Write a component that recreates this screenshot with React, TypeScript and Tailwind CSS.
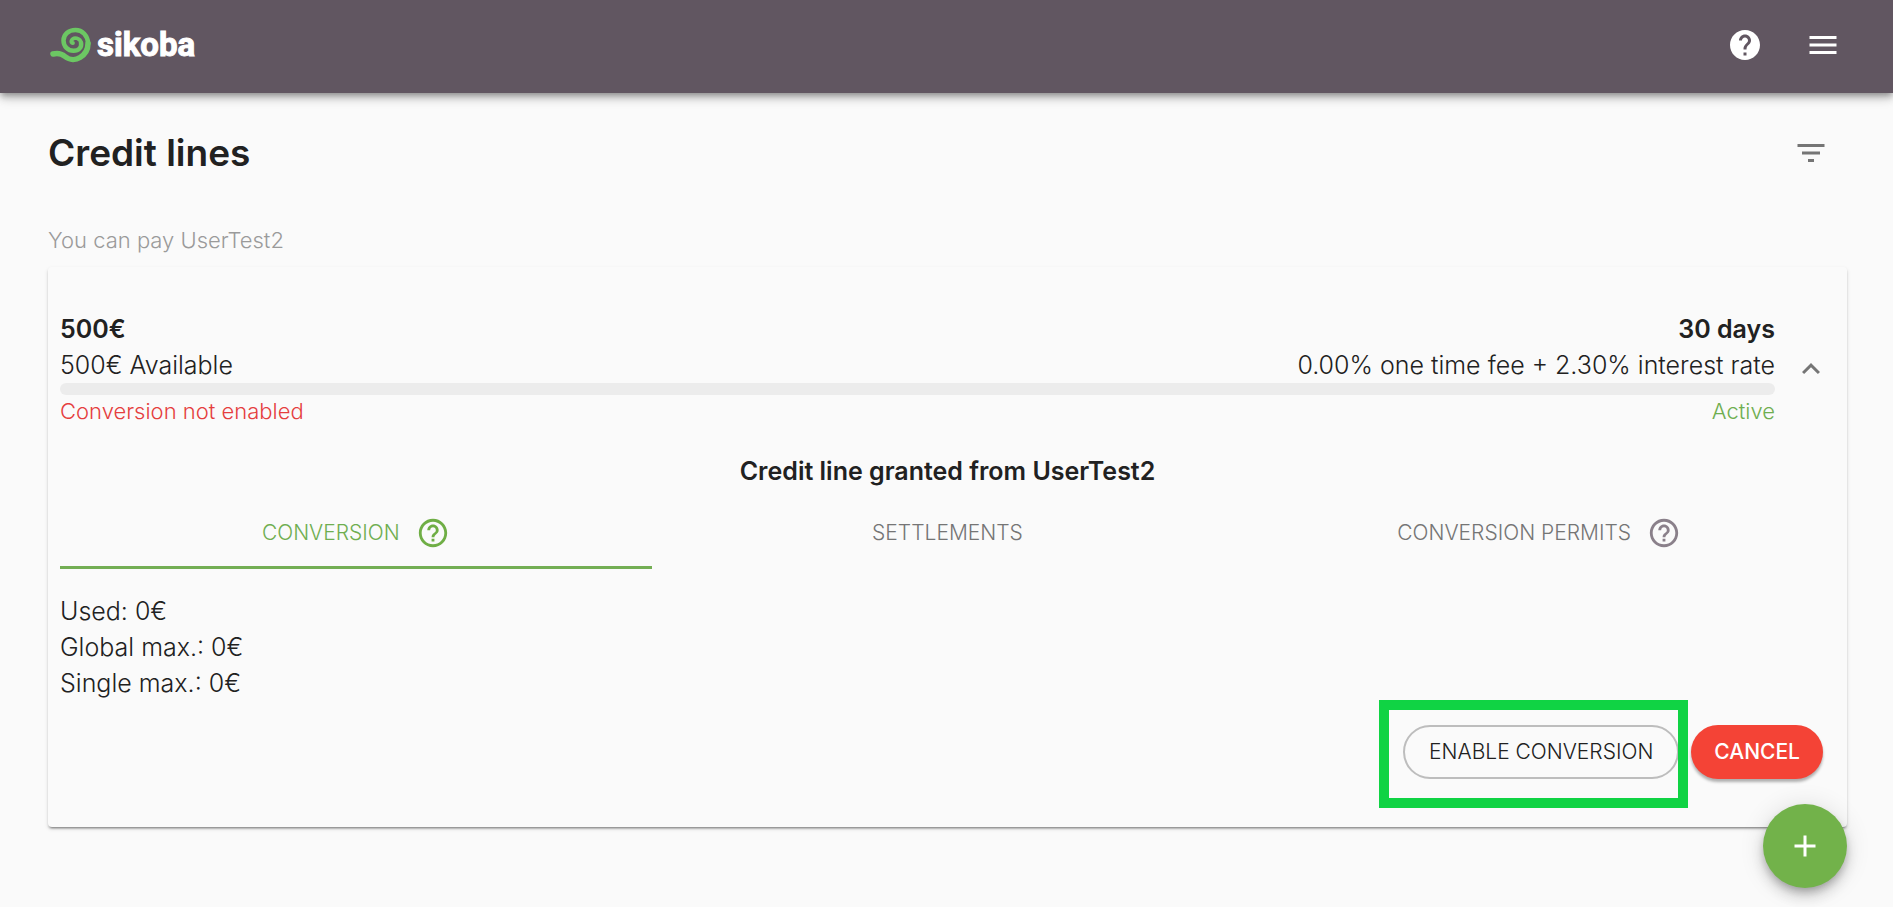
import React from "react";
import { MdHelp, MdHelpOutline, MdMenu, MdFilterList, MdExpandLess, MdAdd } from "react-icons/md";

function Logo() {
  return (
    <a href="#" aria-label="sikoba" className="flex items-center gap-[5px]">
      <svg viewBox="0 0 43 37" className="h-[37px] w-[43px]" fill="none" stroke="#6cc763" strokeLinecap="round" strokeLinejoin="round" aria-hidden="true">
        <path strokeWidth="5.5" d="M4 28 C9 26.500 13 28 16 30.500 C21 34.500 27 34 31 31.500 C36 28.500 39 24 39 17.500" />
        <path strokeWidth="4.5" d="M39.300 17.500 C38.500 9.500 33.500 4 26.500 4 C19.500 4 14.500 8.500 14.500 14.500 C14.500 20.500 19 24.800 24.500 24.800 C30 24.800 33 21 32 16.800" />
        <path strokeWidth="3.8" d="M32.200 17.500 C31.500 11.500 24.500 10.500 22.500 14.500 C22 16 22.500 17.200 24 17" />
      </svg>
      <span className="font-['Roboto',sans-serif] text-[33px] leading-9 font-bold text-white [-webkit-text-stroke:1px_white] [stroke-linejoin:round]">sikoba</span>
    </a>
  );
}

const tabs = [
  { label: "Conversion", help: true },
  { label: "Settlements", help: false },
  { label: "Conversion permits", help: true },
];

export default function App() {
  const [active, setActive] = React.useState(0);
  return (
    <div className="min-h-screen bg-[#fafafa] font-['Inter',sans-serif] text-[25px] leading-9 font-light text-[#212121]">
      <header className="flex h-[93px] items-center justify-between bg-[#615661] pr-[52px] pb-1 pl-[49px] shadow-[0_3px_6px_-1px_rgba(0,0,0,0.3),0_6px_8px_rgba(0,0,0,0.14),0_2px_15px_rgba(0,0,0,0.12)]">
        <Logo />
        <div className="flex items-center gap-[42px] text-white">
          <button type="button" aria-label="Help"><MdHelp className="size-9" /></button>
          <button type="button" aria-label="Menu"><MdMenu className="size-9" /></button>
        </div>
      </header>

      <main className="pr-[46px] pb-[79px] pl-12">
        <div className="flex items-center justify-between pt-9 pr-[18px]">
          <h1 className="text-[37px] leading-12 font-semibold">Credit lines</h1>
          <button type="button" aria-label="Filter" className="text-[#757575]"><MdFilterList className="size-9" /></button>
        </div>
        <p className="mt-[45px] text-[22px] leading-9 text-[#9a9a9a]">You can pay UserTest2</p>

        <section className="mt-[9px] rounded-sm px-3 pt-11 pb-12 shadow-[0_3px_2px_-2px_rgba(0,0,0,0.3),0_2px_2px_rgba(0,0,0,0.14),0_2px_4px_rgba(0,0,0,0.12)]">
          <div className="flex items-center">
            <div className="flex-1">
              <div className="flex justify-between font-semibold"><span>500€</span><span>30 days</span></div>
              <div className="flex justify-between"><span>500€ Available</span><span>0.00% one time fee + 2.30% interest rate</span></div>
              <div className="h-3 rounded-full bg-[#ececec]" />
              <div className="flex justify-between text-[22px] leading-8">
                <span className="text-[#e53e3e]">Conversion not enabled</span>
                <span className="text-[#6fae50]">Active</span>
              </div>
            </div>
            <button type="button" aria-label="Collapse" className="ml-[18px] mr-[6px] text-[#757575]"><MdExpandLess className="size-9" /></button>
          </div>

          <h2 className="mt-[26px] text-center font-semibold">Credit line granted from UserTest2</h2>

          <div role="tablist" className="mt-2 grid grid-cols-3">
            {tabs.map((t, i) => (
              <button
                key={t.label}
                type="button"
                role="tab"
                aria-selected={i === active}
                onClick={() => setActive(i)}
                className={
                  i === active
                    ? "flex h-[72px] items-center justify-center gap-4 border-b-[3px] border-[#73ae54] pt-0.5 text-[21px] text-[#6fae50] uppercase"
                    : "flex h-[72px] items-center justify-center gap-4 border-b-[3px] border-transparent pt-0.5 text-[21px] text-[#757575] uppercase"
                }
              >
                {t.label}
                {t.help && <MdHelpOutline className={i === active ? "size-[34px] text-[#6fae45]" : "size-[34px] text-[#8a808a]"} />}
              </button>
            ))}
          </div>

          <div role="tabpanel" className="mt-6">
            <p>Used: 0€</p>
            <p>Global max.: 0€</p>
            <p>Single max.: 0€</p>
          </div>

          <div className="mt-6 flex justify-end gap-3 pr-3">
            <div className="relative">
              <button type="button" className="h-[54px] rounded-full border-2 border-[#bdbdbd] px-6 text-[21px] uppercase">Enable conversion</button>
              <div className="pointer-events-none absolute -top-[25px] -right-[9px] -bottom-[29px] -left-6 border-10 border-[#10d344]" />
            </div>
            <button type="button" className="h-[54px] rounded-full bg-[#f44336] px-[23px] text-[21px] font-medium text-white uppercase shadow-[0_3px_3px_rgba(0,0,0,0.3)]">Cancel</button>
          </div>
        </section>
      </main>

      <button type="button" aria-label="Add credit line" className="fixed right-[46px] bottom-[19px] flex size-[84px] items-center justify-center rounded-full bg-[#72b24a] text-white shadow-[0_5px_8px_-2px_rgba(0,0,0,0.25),0_9px_15px_rgba(0,0,0,0.14),0_2px_26px_rgba(0,0,0,0.12)]">
        <MdAdd className="size-9" />
      </button>
    </div>
  );
}
